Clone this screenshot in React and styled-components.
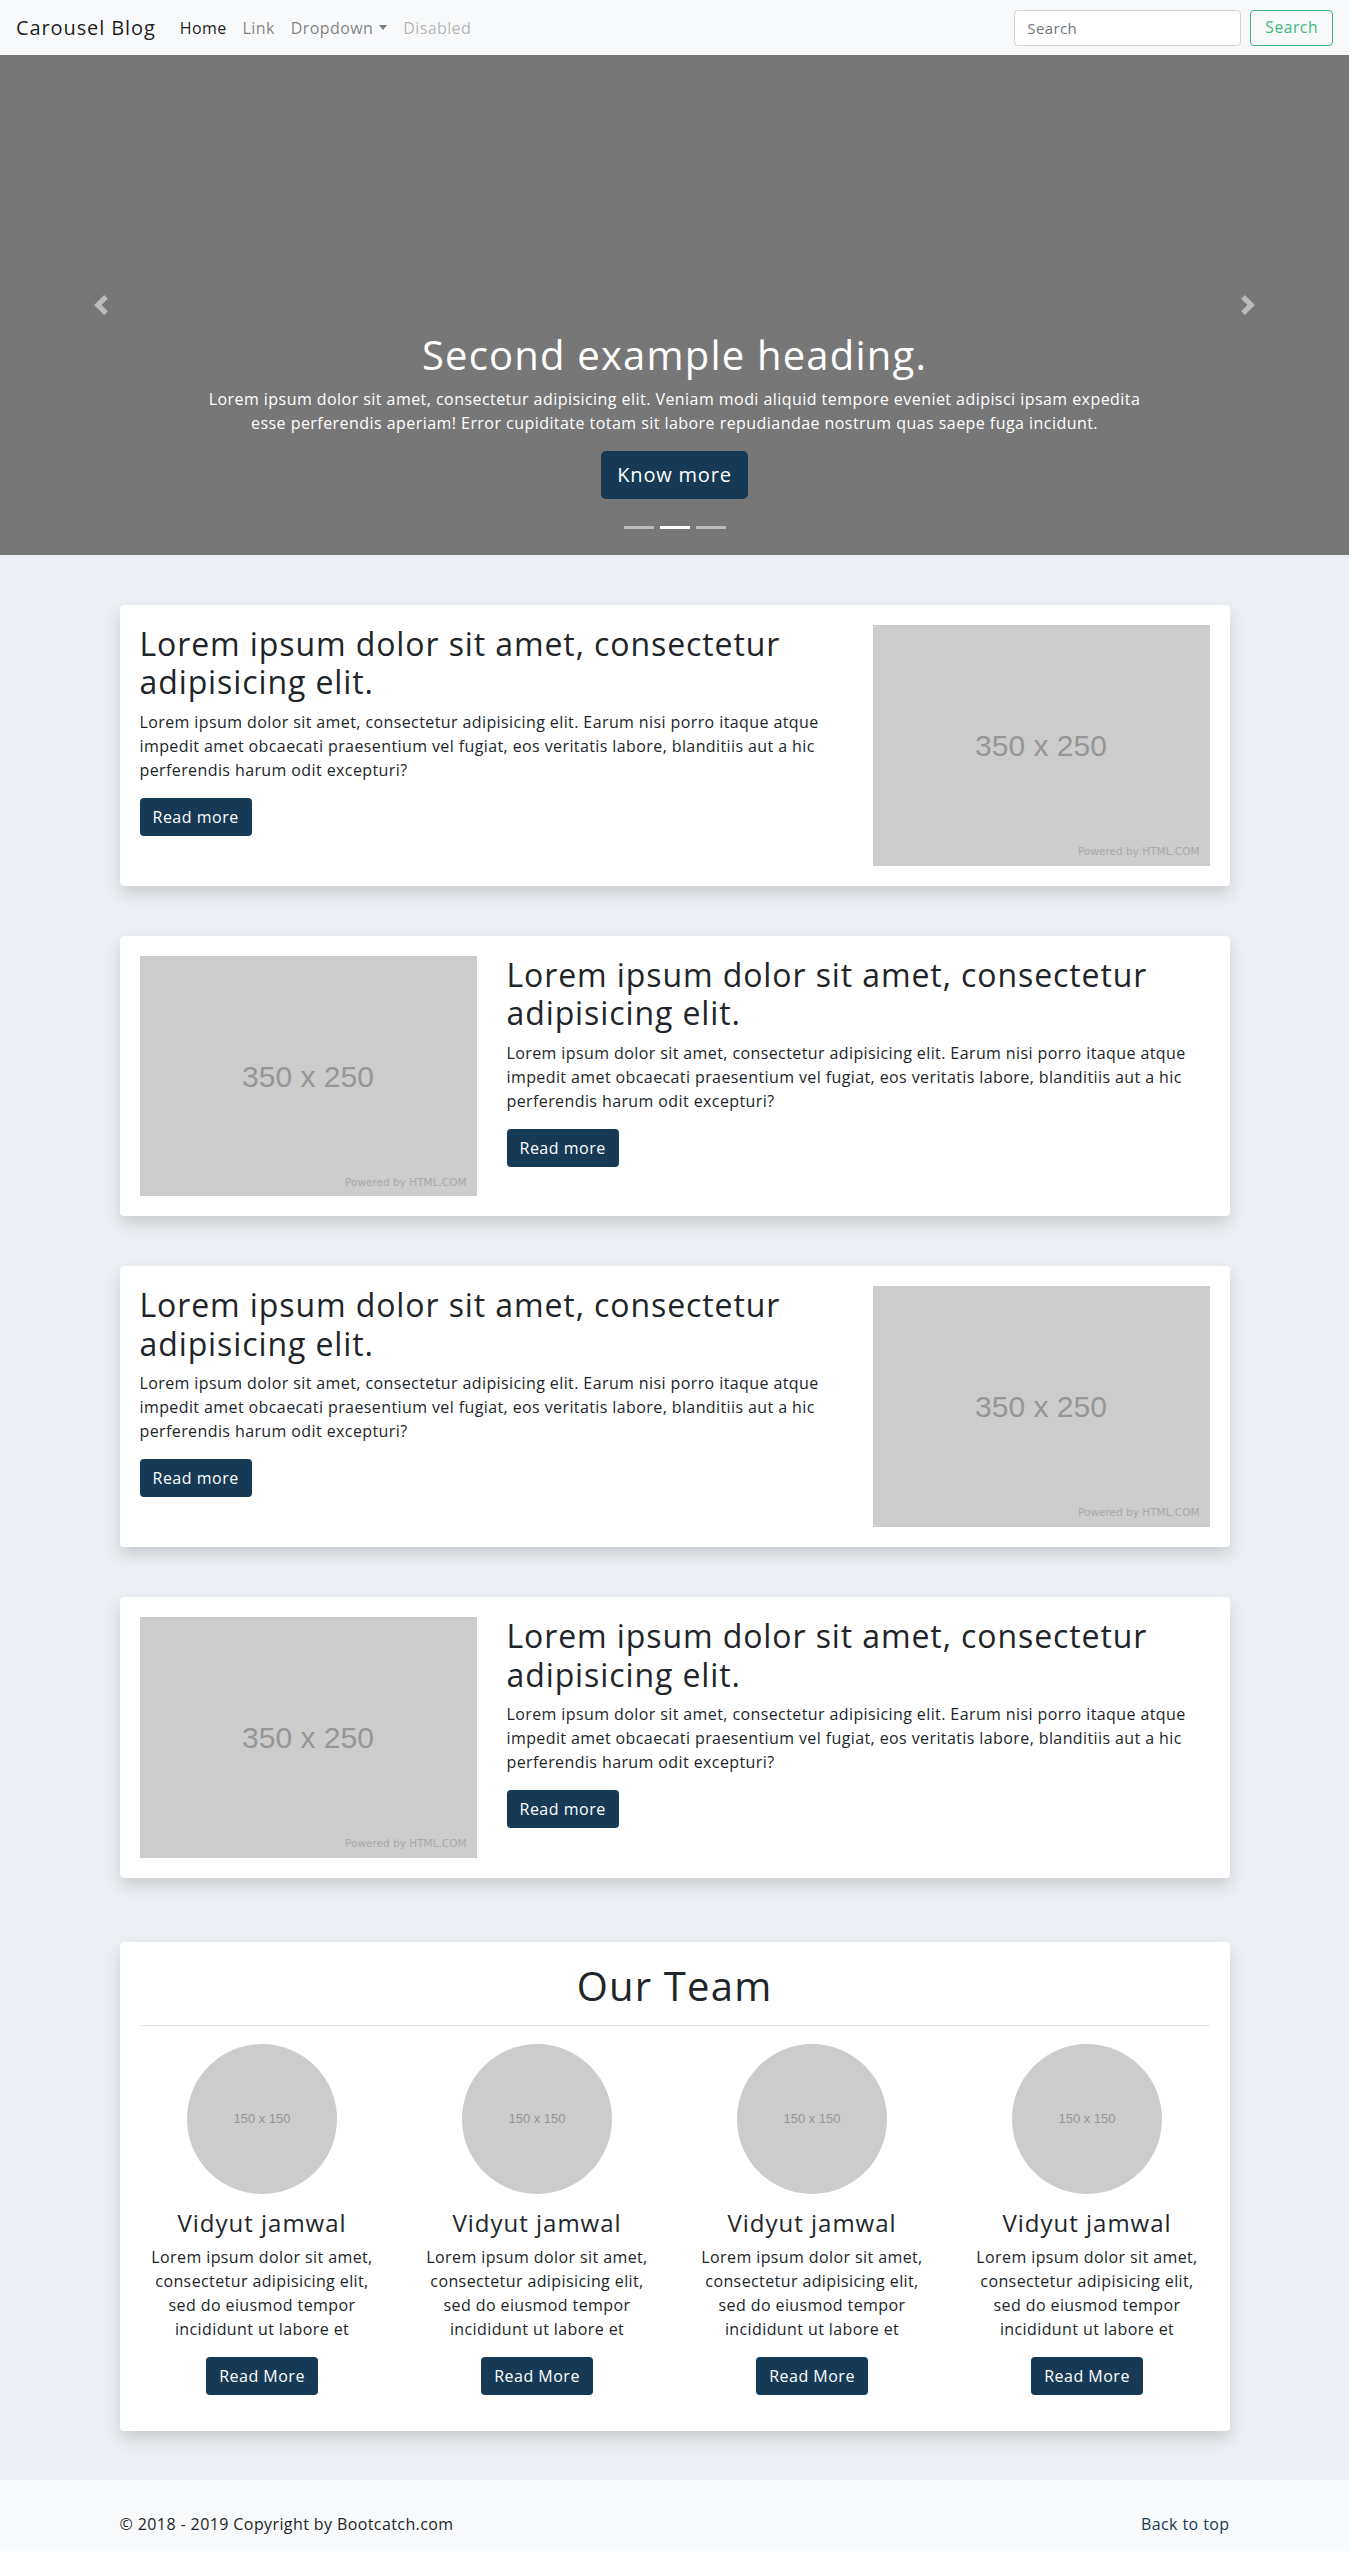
import React from 'react';
import styled, {createGlobalStyle} from 'styled-components';

const GlobalStyle = createGlobalStyle`
  * {
    box-sizing: border-box;
  }
  body {
    margin: 0;
    font-family: "Open Sans", "Liberation Sans", sans-serif;
    font-size: 16px;
    line-height: 1.5;
    letter-spacing: 0.4px;
    color: #212529;
    background: #ecf0f4;
  }
  h1, h2, h3, h4, p {
    margin-top: 0;
  }
`;

const NAVY = '#163a56';

const Navbar = styled.nav`
  display: flex;
  align-items: center;
  height: 55px;
  padding: 0 16px;
  background: #f8f9fa;
`;

const Brand = styled.a`
  font-size: 20px;
  line-height: 30px;
  letter-spacing: 0.9px;
  color: rgba(0, 0, 0, 0.9);
  margin-right: 16px;
  text-decoration: none;
`;

const NavList = styled.ul`
  display: flex;
  list-style: none;
  margin: 0;
  padding: 0;
  flex: 1;
`;

const NavLink = styled.a`
  display: flex;
  align-items: center;
  padding: 8px;
  font-size: 16px;
  text-decoration: none;
  color: ${props =>
    props.active ? 'rgba(0,0,0,0.9)' : props.disabled ? 'rgba(0,0,0,0.3)' : 'rgba(0,0,0,0.5)'};
`;

const Caret = styled.span`
  display: inline-block;
  margin-left: 6px;
  border-top: 5px solid;
  border-left: 4px solid transparent;
  border-right: 4px solid transparent;
`;

const SearchForm = styled.form`
  display: flex;
  gap: 9px;
`;

const SearchInput = styled.input`
  width: 227px;
  height: 36px;
  padding: 6px 12px;
  font: inherit;
  font-size: 15px;
  letter-spacing: 0.4px;
  border: 1px solid #ced4da;
  border-radius: 4px;
  background: #fff;
  &::placeholder {
    color: #6c757d;
  }
`;

const SearchButton = styled.button`
  height: 36px;
  padding: 0 14px;
  font: inherit;
  font-size: 15.5px;
  letter-spacing: 0.6px;
  color: #3bb77e;
  background: transparent;
  border: 1px solid #3bb77e;
  border-radius: 4px;
`;

const Carousel = styled.section`
  position: relative;
  height: 500px;
  background: #777;
  display: flex;
  flex-direction: column;
  justify-content: flex-end;
  align-items: center;
  padding: 0 15% 20px;
`;

const Control = styled.a`
  position: absolute;
  top: 0;
  bottom: 0;
  ${props => (props.side === 'left' ? 'left: 0;' : 'right: 0;')}
  width: 15%;
  display: flex;
  align-items: center;
  justify-content: center;
  opacity: 0.5;
`;

const Caption = styled.div`
  text-align: center;
  color: #fff;
  padding: 20px 0;
`;

const CaptionTitle = styled.h1`
  font-size: 40px;
  font-weight: 400;
  line-height: 48px;
  letter-spacing: 1.2px;
  margin-bottom: 8px;
`;

const CaptionText = styled.p`
  margin-bottom: 16px;
  font-size: 16px;
  line-height: 24px;
  letter-spacing: 0.45px;
`;

const ButtonLine = styled.p`
  margin-bottom: 16px;
`;

const Button = styled.a`
  display: inline-block;
  background: ${NAVY};
  color: #fff;
  text-decoration: none;
  border-radius: ${props => (props.large ? '5px' : '4px')};
  font-size: ${props => (props.large ? '20px' : '16px')};
  letter-spacing: ${props => (props.large ? '0.8px' : '0.5px')};
  line-height: ${props => (props.large ? '32px' : '24px')};
  padding: ${props => (props.large ? '8px 16px' : '7px 13px')};
`;

const Indicators = styled.ol`
  position: absolute;
  bottom: 0;
  left: 0;
  right: 0;
  display: flex;
  justify-content: center;
  list-style: none;
  margin: 0 0 26px;
  padding: 0;
`;

const Indicator = styled.li`
  width: 30px;
  height: 3px;
  margin: 0 3px;
  background: ${props => (props.active ? '#fff' : 'rgba(255,255,255,0.5)')};
`;

const Main = styled.main`
  padding: 50px 0 49px;
`;

const Container = styled.div`
  max-width: 1140px;
  margin: 0 auto;
  padding: 0 15px;
`;

const Card = styled.article`
  background: #fff;
  border-radius: 4px;
  box-shadow: 0 8px 16px rgba(0, 0, 0, 0.15);
  padding: 20px;
  margin-bottom: ${props => props.gap}px;
`;

const FeatureRow = styled.div`
  display: grid;
  grid-template-columns: ${props => (props.reverse ? '337px minmax(0, 1fr)' : 'minmax(0, 1fr) 337px')};
  column-gap: 30px;
`;

const FeatureText = styled.div`
  order: ${props => (props.reverse ? 2 : 1)};
`;

const FeatureTitle = styled.h2`
  font-size: 32px;
  font-weight: 400;
  line-height: 38.4px;
  letter-spacing: 0.9px;
  margin-bottom: 8px;
`;

const FeatureBody = styled.p`
  font-size: 16px;
  line-height: 24px;
  margin-bottom: 16px;
`;

const Placeholder = styled.div`
  order: ${props => (props.reverse ? 1 : 2)};
  position: relative;
  aspect-ratio: 350 / 250;
  background: #ccc;
  display: flex;
  align-items: center;
  justify-content: center;
  color: #969696;
  font-family: "Liberation Sans", Arial, sans-serif;
  font-size: 30px;
  letter-spacing: 0;
`;

const PoweredBy = styled.span`
  position: absolute;
  right: 10px;
  bottom: 6px;
  font-family: "DejaVu Sans", sans-serif;
  font-size: 10.5px;
  color: #a8a8a8;
`;

const TeamTitle = styled.h2`
  text-align: center;
  font-size: 40px;
  font-weight: 400;
  line-height: 48px;
  letter-spacing: 1.2px;
  margin: 0;
`;

const Rule = styled.hr`
  border: 0;
  border-top: 1px solid rgba(0, 0, 0, 0.1);
  margin: 15px 0 18px;
`;

const TeamGrid = styled.div`
  display: grid;
  grid-template-columns: repeat(4, 1fr);
  column-gap: 30px;
  padding-bottom: 16px;
`;

const Member = styled.div`
  display: flex;
  flex-direction: column;
  align-items: center;
  text-align: center;
`;

const Avatar = styled.div`
  width: 150px;
  height: 150px;
  border-radius: 50%;
  background: #ccc;
  display: flex;
  align-items: center;
  justify-content: center;
  color: #969696;
  font-family: "Liberation Sans", Arial, sans-serif;
  font-size: 13px;
  letter-spacing: 0;
  margin-bottom: 14px;
`;

const MemberName = styled.h3`
  font-size: 24px;
  font-weight: 400;
  line-height: 29px;
  letter-spacing: 1px;
  margin-bottom: 8px;
`;

const MemberText = styled.p`
  font-size: 16px;
  line-height: 24px;
  margin-bottom: 16px;
`;

const Footer = styled.footer`
  background: #f8f9fa;
  padding: 32px 0;
`;

const FooterRow = styled.div`
  display: flex;
  justify-content: space-between;
  font-size: 16px;
`;

const BackLink = styled.a`
  color: ${NAVY};
  text-decoration: none;
`;

const Chevron = ({flip}) => (
  <svg width="20" height="20" viewBox="0 0 8 8" fill="#fff" style={flip ? {transform: 'scaleX(-1)'} : null}>
    <path d="M5.25 0l-4 4 4 4 1.5-1.5L4.25 4l2.5-2.5L5.25 0z" />
  </svg>
);

const lorem =
  'Lorem ipsum dolor sit amet, consectetur adipisicing elit. Earum nisi porro itaque atque impedit amet obcaecati praesentium vel fugiat, eos veritatis labore, blanditiis aut a hic perferendis harum odit excepturi?';

const features = [false, true, false, true];

export default function App() {
  return (
    <>
      <GlobalStyle />
      <Navbar>
        <Brand href="#">Carousel Blog</Brand>
        <NavList>
          <li><NavLink href="#" active>Home</NavLink></li>
          <li><NavLink href="#">Link</NavLink></li>
          <li><NavLink href="#">Dropdown<Caret /></NavLink></li>
          <li><NavLink href="#" disabled>Disabled</NavLink></li>
        </NavList>
        <SearchForm onSubmit={e => e.preventDefault()}>
          <SearchInput placeholder="Search" />
          <SearchButton>Search</SearchButton>
        </SearchForm>
      </Navbar>

      <Carousel>
        <Control side="left" href="#"><Chevron /></Control>
        <Control side="right" href="#"><Chevron flip /></Control>
        <Caption>
          <CaptionTitle>Second example heading.</CaptionTitle>
          <CaptionText>
            Lorem ipsum dolor sit amet, consectetur adipisicing elit. Veniam modi aliquid tempore eveniet adipisci
            ipsam expedita esse perferendis aperiam! Error cupiditate totam sit labore repudiandae nostrum quas saepe
            fuga incidunt.
          </CaptionText>
          <ButtonLine>
            <Button large href="#">Know more</Button>
          </ButtonLine>
        </Caption>
        <Indicators>
          <Indicator />
          <Indicator active />
          <Indicator />
        </Indicators>
      </Carousel>

      <Main>
        <Container>
          {features.map((reverse, i) => (
            <Card key={i} gap={i === features.length - 1 ? 64 : 50}>
              <FeatureRow reverse={reverse}>
                <FeatureText reverse={reverse}>
                  <FeatureTitle>Lorem ipsum dolor sit amet, consectetur adipisicing elit.</FeatureTitle>
                  <FeatureBody>{lorem}</FeatureBody>
                  <Button href="#">Read more</Button>
                </FeatureText>
                <Placeholder reverse={reverse}>
                  350 x 250
                  <PoweredBy>Powered by HTML.COM</PoweredBy>
                </Placeholder>
              </FeatureRow>
            </Card>
          ))}

          <Card gap={0}>
            <TeamTitle>Our Team</TeamTitle>
            <Rule />
            <TeamGrid>
              {[0, 1, 2, 3].map(i => (
                <Member key={i}>
                  <Avatar>150 x 150</Avatar>
                  <MemberName>Vidyut jamwal</MemberName>
                  <MemberText>
                    Lorem ipsum dolor sit amet, consectetur adipisicing elit, sed do eiusmod tempor incididunt ut labore et
                  </MemberText>
                  <Button href="#">Read More</Button>
                </Member>
              ))}
            </TeamGrid>
          </Card>
        </Container>
      </Main>

      <Footer>
        <Container>
          <FooterRow>
            <span>© 2018 - 2019 Copyright by Bootcatch.com</span>
            <BackLink href="#">Back to top</BackLink>
          </FooterRow>
        </Container>
      </Footer>
    </>
  );
}
